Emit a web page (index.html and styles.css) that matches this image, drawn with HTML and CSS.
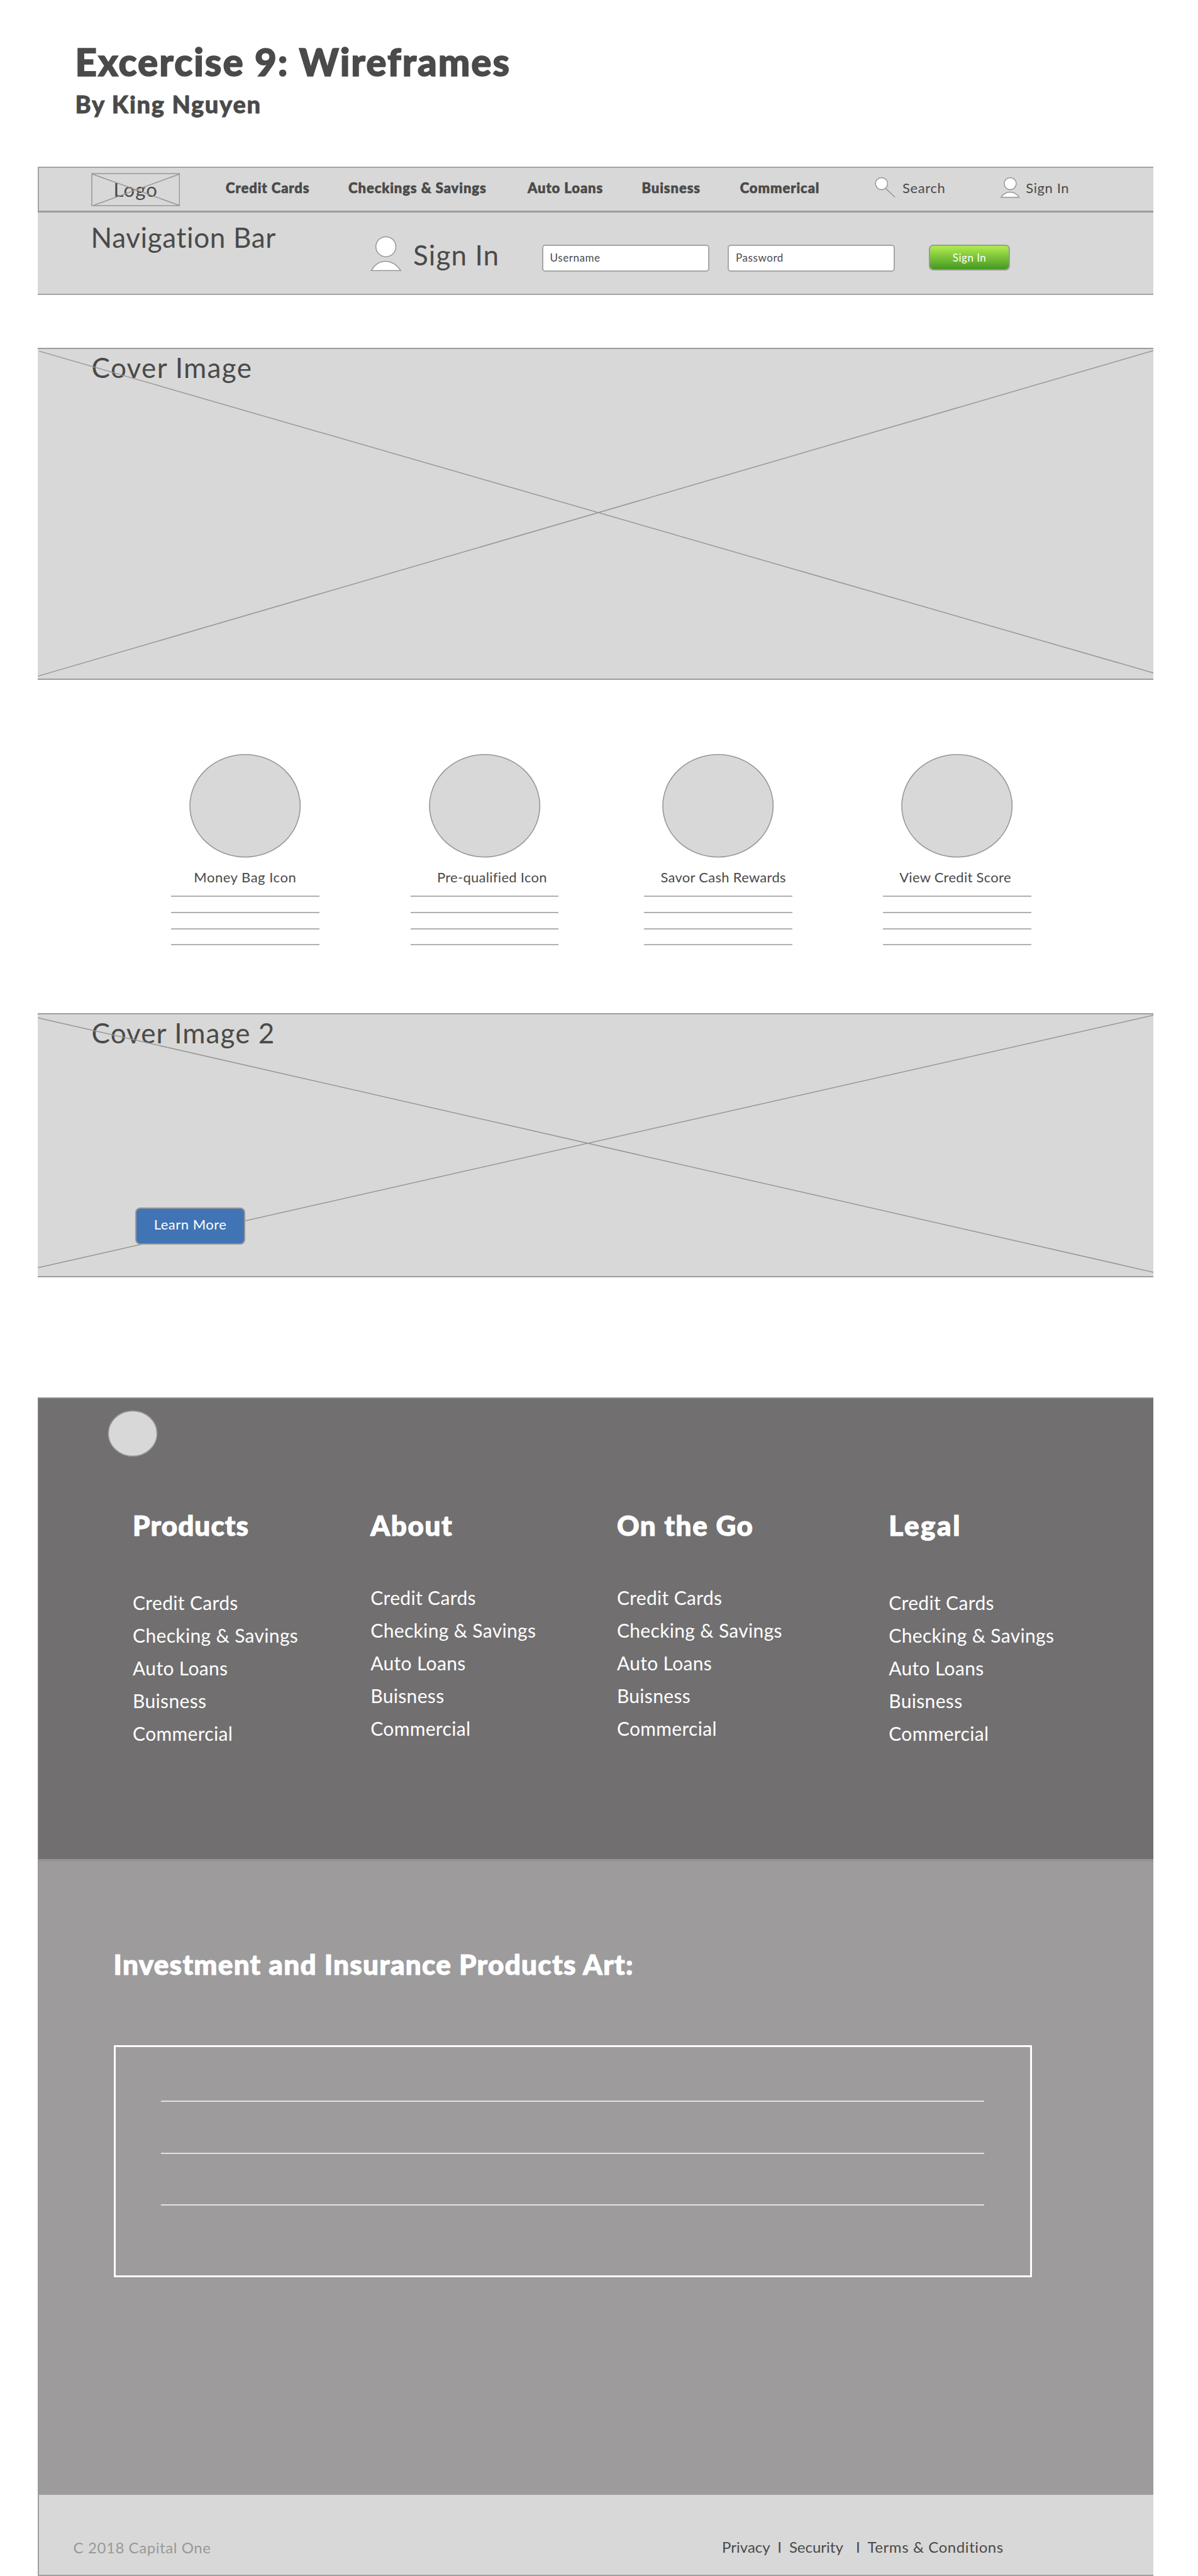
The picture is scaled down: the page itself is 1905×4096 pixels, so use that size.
FILE: index.html
```html
<!DOCTYPE html>
<html lang="en">
<head>
<meta charset="utf-8">
<title>Excercise 9: Wireframes</title>
<link rel="stylesheet" href="styles.css">
</head>
<body>
<header class="intro">
  <h1 class="intro-title">Excercise 9: Wireframes</h1>
  <h2 class="intro-author">By King Nguyen</h2>
</header>

<main class="page">
  <nav class="nav">
    <div class="nav-main">
      <div class="logo">
        <span class="logo-text">Logo</span>
        <svg class="cross" viewBox="0 0 141 53" preserveAspectRatio="none"><rect x="1" y="1" width="139.4" height="51"/><path d="M1 1.5 140 51.5M4 51.5 140 2"/></svg>
      </div>
      <a class="nav-link">Credit Cards</a>
      <a class="nav-link">Checkings &amp; Savings</a>
      <a class="nav-link">Auto Loans</a>
      <a class="nav-link">Buisness</a>
      <a class="nav-link">Commerical</a>
      <a class="nav-tool nav-search">
        <svg class="icon" width="33" height="34" viewBox="0 0 33 34"><circle cx="10.8" cy="11" r="9.6"/><path d="M17.4 18.6 32.2 32.8"/></svg>
        <span>Search</span>
      </a>
      <a class="nav-tool nav-signin">
        <svg class="icon" width="31" height="34" viewBox="0 0 31 34"><circle cx="15.4" cy="11" r="9.6"/><path d="M1 32.7C4.5 27 9.5 24.4 15.3 24.4S26 27 29.4 32.7Z"/></svg>
        <span>Sign In</span>
      </a>
    </div>
    <div class="nav-login">
      <h3 class="section-title nav-title">Navigation Bar</h3>
      <svg class="icon user-icon" width="50" height="57" viewBox="0 0 50 57"><circle cx="24.6" cy="17.3" r="15.9"/><path d="M1.5 55.2C7 45.5 15 40.4 24 40.4S42.5 46 48 55.2Z"/></svg>
      <span class="section-title login-title">Sign In</span>
      <div class="field">Username</div>
      <div class="field">Password</div>
      <div class="btn-green">Sign In</div>
    </div>
  </nav>

  <section class="cover cover-one">
    <h3 class="section-title cover-title">Cover Image</h3>
    <svg class="cross" viewBox="0 0 1775 524" preserveAspectRatio="none"><path d="M2.3 3.4 1775 515M0.5 520.1 1775 2.4"/></svg>
  </section>

  <section class="features">
    <article class="feature">
      <svg class="disc" width="178" height="166" viewBox="0 0 178 166"><ellipse cx="88.7" cy="83.2" rx="87.7" ry="81.5"/></svg>
      <p class="feature-name">Money Bag Icon</p>
      <div class="copy"><hr><hr><hr><hr></div>
    </article>
    <article class="feature">
      <svg class="disc" width="178" height="166" viewBox="0 0 178 166"><ellipse cx="88.7" cy="83.2" rx="87.7" ry="81.5"/></svg>
      <p class="feature-name">Pre-qualified Icon</p>
      <div class="copy"><hr><hr><hr><hr></div>
    </article>
    <article class="feature">
      <svg class="disc" width="178" height="166" viewBox="0 0 178 166"><ellipse cx="88.7" cy="83.2" rx="87.7" ry="81.5"/></svg>
      <p class="feature-name">Savor Cash Rewards</p>
      <div class="copy"><hr><hr><hr><hr></div>
    </article>
    <article class="feature">
      <svg class="disc" width="178" height="166" viewBox="0 0 178 166"><ellipse cx="88.7" cy="83.2" rx="87.7" ry="81.5"/></svg>
      <p class="feature-name">View Credit Score</p>
      <div class="copy"><hr><hr><hr><hr></div>
    </article>
  </section>

  <section class="cover cover-two">
    <h3 class="section-title cover-title">Cover Image 2</h3>
    <svg class="cross" viewBox="0 0 1775 416" preserveAspectRatio="none"><path d="M0.5 5.5 1775 410M0.5 402.7 1775 1.2"/></svg>
    <a class="btn-blue">Learn More</a>
  </section>

  <section class="sitemap">
    <svg class="badge" width="80" height="75" viewBox="0 0 80 75"><ellipse cx="40" cy="37.4" rx="38.7" ry="36"/></svg>
    <div class="columns">
      <div class="column">
        <h4 class="heading">Products</h4>
        <ul class="links"><li>Credit Cards</li><li>Checking &amp; Savings</li><li>Auto Loans</li><li>Buisness</li><li>Commercial</li></ul>
      </div>
      <div class="column">
        <h4 class="heading">About</h4>
        <ul class="links"><li>Credit Cards</li><li>Checking &amp; Savings</li><li>Auto Loans</li><li>Buisness</li><li>Commercial</li></ul>
      </div>
      <div class="column">
        <h4 class="heading">On the Go</h4>
        <ul class="links"><li>Credit Cards</li><li>Checking &amp; Savings</li><li>Auto Loans</li><li>Buisness</li><li>Commercial</li></ul>
      </div>
      <div class="column">
        <h4 class="heading">Legal</h4>
        <ul class="links"><li>Credit Cards</li><li>Checking &amp; Savings</li><li>Auto Loans</li><li>Buisness</li><li>Commercial</li></ul>
      </div>
    </div>
  </section>

  <section class="disclosure">
    <h4 class="heading">Investment and Insurance Products Art:</h4>
    <div class="disclosure-box"><hr><hr><hr></div>
  </section>

  <footer class="legal">
    <span class="copyright">C 2018 Capital One</span>
    <span class="policy policy-privacy">Privacy</span>
    <span class="policy">I</span>
    <span class="policy">Security</span>
    <span class="policy">I</span>
    <span class="policy policy-terms">Terms &amp; Conditions</span>
  </footer>
</main>
</body>
</html>
```
FILE: styles.css
```css
* {
  box-sizing: border-box;
  margin: 0;
  padding: 0;
}

body {
  width: 1905px;
  height: 4096px;
  background: #fff;
  color: #4a4a4a;
  font-family: Lato, "Open Sans", sans-serif;
  font-weight: 400;
  line-height: 1.2;
  white-space: nowrap;
}

ul {
  list-style: none;
}

hr {
  height: 2px;
  border: 0;
}

svg {
  display: block;
  flex: none;
}

/* Intro */
.intro {
  height: 265px;
  padding: 62px 0 0 119.5px;
}

.intro-title {
  font-size: 60px;
  font-weight: 900;
  letter-spacing: 2.03px;
  -webkit-text-stroke: 1.6px currentColor;
}

.intro-author {
  margin-top: 9px;
  font-size: 38px;
  font-weight: 900;
  letter-spacing: 1.72px;
  -webkit-text-stroke: 0.8px currentColor;
}

.page {
  width: 1774.2px;
  margin-left: 59.6px;
}

/* Placeholder diagonals drawn over their box */
.cross {
  position: absolute;
  inset: 0;
  width: 100%;
  height: 100%;
  fill: none;
  stroke: #979797;
  stroke-width: 1.5;
}

.section-title {
  font-size: 44px;
  font-weight: 400;
  letter-spacing: 1.1px;
}

/* Navigation */
.nav {
  height: 204px;
  background: #d8d8d8;
  border-bottom: 2px solid #a3a3a3;
}

.nav-main {
  display: grid;
  grid-template-columns: 214.5px 195px 284.8px 181.6px 156.2px 213.9px 200px auto;
  align-items: start;
  height: 73px;
  padding-left: 83px;
  border-top: 2px solid #a3a3a3;
  border-left: 2px solid #a3a3a3;
  border-bottom: 3px solid #9c9c9c;
}

.logo {
  position: relative;
  width: 141px;
  height: 53px;
  margin-top: 8px;
  padding: 7.5px 0 0 36px;
}

.logo-text {
  display: block;
  font-size: 31px;
  letter-spacing: 1.2px;
}

.nav-link {
  padding-top: 19px;
  font-size: 22px;
  font-weight: 900;
  letter-spacing: 0.93px;
  -webkit-text-stroke: 0.7px currentColor;
}

.nav-tool {
  display: flex;
  align-items: flex-start;
  padding-top: 14px;
  font-size: 22px;
  letter-spacing: 0.6px;
}

.nav-tool span {
  padding-top: 5px;
}

.nav-search {
  gap: 11.5px;
}

.nav-signin {
  gap: 9.7px;
}

.icon {
  fill: #fff;
  stroke: #979797;
  stroke-width: 1.5;
}

.nav-login {
  display: grid;
  grid-template-columns: 444px 68.5px 204.5px 295.5px 320px auto;
  align-items: start;
  padding-left: 85px;
}

.nav-title {
  padding-top: 13px;
  letter-spacing: 0.65px;
}

.user-icon {
  margin-top: 37px;
}

.login-title {
  padding-top: 40.5px;
}

.field {
  width: 266px;
  height: 43px;
  margin-top: 51px;
  padding: 9px 0 0 11px;
  background: #fff;
  border: 2px solid #a6a6a6;
  border-radius: 5px;
  font-size: 17px;
  letter-spacing: 0.55px;
}

.btn-green {
  width: 129px;
  height: 41px;
  margin-top: 51px;
  padding-top: 9px;
  background: linear-gradient(#b0ec50, #459822) padding-box;
  border: 2px solid #999;
  border-radius: 7px;
  color: #fff;
  font-size: 17px;
  letter-spacing: 0.5px;
  text-align: center;
}

/* Cover images */
.cover {
  position: relative;
  background: #d8d8d8;
  border-top: 2px solid #9c9c9c;
  border-bottom: 2px solid #9c9c9c;
}

.cover-one {
  height: 528px;
  margin-top: 84px;
}

.cover-one .cover-title {
  letter-spacing: 1.36px;
}

.cover-two {
  height: 420px;
}

.cover-title {
  padding: 3px 0 0 86px;
}

.btn-blue {
  position: relative;
  display: block;
  width: 175px;
  height: 59px;
  margin: 251.5px 0 0 155.5px;
  background: #4174b4;
  border: 2px solid #979797;
  border-radius: 8px;
  color: #fff;
  font-size: 22px;
  line-height: 50px;
  letter-spacing: 0.5px;
  text-align: center;
}

/* Features */
.features {
  display: grid;
  grid-template-columns: 380.7px 371.5px 379.7px 236px;
  height: 530px;
  padding: 117px 0 0 212.7px;
}

.feature {
  width: 235.5px;
}

.disc {
  margin-left: 28.7px;
  fill: #d8d8d8;
  stroke: #979797;
  stroke-width: 1.6;
}

.feature-name {
  margin: 18px 0 16px 36px;
  font-size: 22px;
  letter-spacing: 0.53px;
}

.feature:nth-child(n + 2) .feature-name {
  margin-left: 42px;
  letter-spacing: 0.28px;
}

.feature:nth-child(n + 3) .feature-name {
  margin-left: 26px;
}

.copy {
  display: grid;
  gap: 23.6px;
}

.copy hr {
  background: #b0b0b0;
}

/* Site map */
.sitemap {
  height: 738px;
  margin-top: 191px;
  padding-top: 18px;
  background: #716f70;
  border-top: 2px solid #8b8b8b;
  border-left: 1px solid #8b8b8b;
  border-bottom: 4px solid #969495;
  color: #fff;
}

.badge {
  margin-left: 110.5px;
  fill: #d8d8d8;
  stroke: #979797;
  stroke-width: 1.6;
}

.columns {
  display: grid;
  grid-template-columns: 378.2px 391.6px 432.4px auto;
  margin-top: 82px;
  padding-left: 150.5px;
}

.heading {
  font-size: 44px;
  font-weight: 900;
  letter-spacing: 1.32px;
  -webkit-text-stroke: 1.2px currentColor;
}

.column:nth-child(1) .heading {
  letter-spacing: 1.1px;
}

.column:nth-child(2) .heading,
.column:nth-child(3) .heading {
  letter-spacing: 1.6px;
}

.column:nth-child(4) .heading {
  letter-spacing: 2.6px;
}

.links {
  margin-top: 62.5px;
  font-size: 30px;
  line-height: 52px;
  letter-spacing: 0.33px;
}

.column:first-child .links,
.column:last-child .links {
  margin-top: 70px;
}

/* Disclosure */
.disclosure {
  height: 1005px;
  padding: 137px 0 0 120px;
  background: #9d9b9c;
  border-left: 1px solid #979596;
  color: #fff;
}

.disclosure-box {
  display: grid;
  align-content: start;
  gap: 80.5px;
  width: 1460px;
  height: 369px;
  margin-top: 102.4px;
  padding: 85px 73px 0 72px;
  border: 3px solid #fff;
}

.disclosure-box hr {
  background: #e2e2e2;
}

/* Legal bar */
.legal {
  display: grid;
  grid-template-columns: 1031.5px 88.2px 18.6px 106px 18.6px auto;
  height: 131px;
  padding: 69px 0 0 55px;
  background: #d8d8d8;
  border: 2px solid #a0a0a0;
  border-right: 0;
  font-size: 24px;
}

.copyright {
  padding-top: 1px;
  color: #999;
  letter-spacing: 0.57px;
}

.policy-terms {
  letter-spacing: 0.58px;
}
```
